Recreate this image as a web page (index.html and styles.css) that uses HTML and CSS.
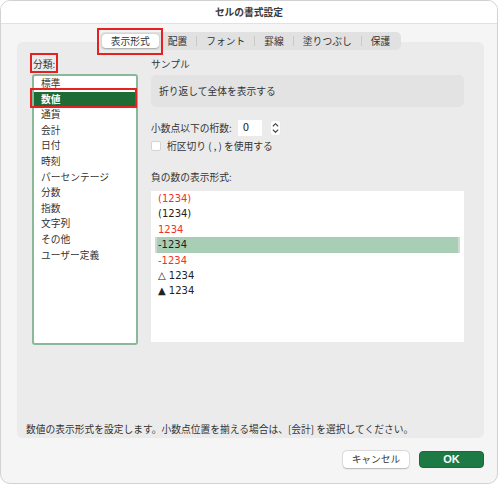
FILE: index.html
```html
<!DOCTYPE html>
<html lang="ja">
<head>
<meta charset="utf-8">
<title>セルの書式設定</title>
<link rel="stylesheet" href="styles.css">
</head>
<body>
<div class="window">
  <div class="titlebar">セルの書式設定</div>
  <div class="main">
    <div class="tabs-wrap">
      <div class="tabs">
        <div class="tab selected">表示形式</div>
        <div class="tab">配置</div>
        <span class="sep"></span>
        <div class="tab">フォント</div>
        <span class="sep"></span>
        <div class="tab">罫線</div>
        <span class="sep"></span>
        <div class="tab">塗りつぶし</div>
        <span class="sep"></span>
        <div class="tab">保護</div>
      </div>
    </div>
    <div class="panel">
      <div class="columns">
        <div class="left">
          <div class="cat-label"><span class="marked">分類:</span></div>
          <ul class="cat-list">
            <li>標準</li>
            <li class="active">数値</li>
            <li>通貨</li>
            <li>会計</li>
            <li>日付</li>
            <li>時刻</li>
            <li>パーセンテージ</li>
            <li>分数</li>
            <li>指数</li>
            <li>文字列</li>
            <li>その他</li>
            <li>ユーザー定義</li>
          </ul>
        </div>
        <div class="right">
          <div class="label">サンプル</div>
          <div class="sample">折り返して全体を表示する</div>
          <div class="decimals">
            <span>小数点以下の桁数:</span>
            <span class="num-input">0</span>
            <svg class="stepper" width="11" height="16" viewBox="0 0 11 16">
              <rect x="0.5" y="0.5" width="10" height="15" rx="3" fill="#fff" stroke="#dcdcdc" stroke-width="0.5"/>
              <path d="M3.2 6 L5.5 3.7 L7.8 6" fill="none" stroke="#444" stroke-width="1.1" stroke-linecap="round" stroke-linejoin="round"/>
              <path d="M3.2 10 L5.5 12.3 L7.8 10" fill="none" stroke="#444" stroke-width="1.1" stroke-linecap="round" stroke-linejoin="round"/>
            </svg>
          </div>
          <div class="check-row">
            <span class="checkbox"></span>
            <span>桁区切り ( , ) を使用する</span>
          </div>
          <div class="label neg-label">負の数の表示形式:</div>
          <ul class="neg-list">
            <li class="red">(1234)</li>
            <li>(1234)</li>
            <li class="red">1234</li>
            <li class="active">-1234</li>
            <li class="red">-1234</li>
            <li>△ 1234</li>
            <li>▲ 1234</li>
          </ul>
        </div>
      </div>
      <p class="desc">数値の表示形式を設定します。小数点位置を揃える場合は、[会計] を選択してください。</p>
    </div>
    <div class="buttons">
      <div class="btn cancel">キャンセル</div>
      <div class="btn ok">OK</div>
    </div>
  </div>
</div>
</body>
</html>
```
FILE: styles.css
```css
* { box-sizing: border-box; }
html, body { margin: 0; padding: 0; background: #ffffff; }
body {
  font-family: "Noto Sans CJK JP", sans-serif;
  font-size: 9.75px;
  color: #333;
}
.window {
  width: 498px;
  height: 484px;
  border: 1px solid #d2d2d2;
  border-radius: 10px;
  overflow: hidden;
  background: #f5f5f5;
}
.titlebar {
  height: 23px;
  background: #fff;
  border-bottom: 1px solid #e2e2e2;
  text-align: center;
  line-height: 22px;
  font-weight: bold;
  color: #3a3a3a;
}
.main { padding: 8px 13px 0 16px; }
.tabs-wrap {
  display: flex;
  justify-content: center;
  position: relative;
  z-index: 1;
  margin-bottom: -8px;
}
.tabs {
  display: flex;
  align-items: center;
  background: #e1e1e1;
  border-radius: 5px;
  padding: 2px;
  height: 18px;
}
.tab { padding: 0 9px; height: 14px; line-height: 14px; color: #333; }
.tab.selected {
  background: #fff;
  border-radius: 4px;
  box-shadow: 0 0.5px 1.5px rgba(0,0,0,0.25);
  position: relative;
}
.tab.selected::after {
  content: "";
  position: absolute;
  left: -5px; right: -4px; top: -6px; bottom: -7px;
  border: 2px solid #e52222;
}
.sep { width: 1px; height: 10px; background: #c9c9c9; }
.panel {
  height: 396px;
  background: #ebebeb;
  border-radius: 6px;
  padding: 15px 20px 2px 15px;
  display: flex;
  flex-direction: column;
}
.columns { display: flex; gap: 13px; }
.left { width: 106px; }
.cat-label { height: 14px; line-height: 14px; margin-bottom: 3px; padding-left: 1px; }
.marked { position: relative; }
.marked::after {
  content: "";
  position: absolute;
  left: -3px; right: -3px; top: -4px; bottom: -2px;
  border: 2px solid #e52222;
}
.cat-list {
  list-style: none;
  margin: 0;
  padding: 0;
  height: 271px;
  background: #fff;
  border: 2px solid #8ab898;
  border-radius: 3px;
}
.cat-list li { height: 15.6px; line-height: 15.6px; padding-left: 7px; position: relative; }
.cat-list li.active { background: #1f6b35; color: #fff; font-weight: bold; }
.cat-list li.active::after {
  content: "";
  position: absolute;
  left: -4px; right: -1px; top: -4px; bottom: -1px;
  border: 2px solid #e52222;
}
.right { width: 313px; }
.label { height: 14px; line-height: 14px; }
.sample {
  margin-top: 4px;
  height: 32px;
  line-height: 32px;
  background: #e3e3e3;
  border-radius: 5px;
  padding-left: 8px;
}
.decimals { margin-top: 13px; display: flex; align-items: center; height: 16px; }
.num-input {
  margin-left: 6px;
  width: 24px;
  height: 16px;
  line-height: 16px;
  background: #fff;
  padding-left: 5px;
  font-family: "DejaVu Sans", sans-serif;
  font-size: 10px;
  color: #222;
}
.stepper { margin-left: 8px; display: block; }
.check-row { margin-top: 3px; display: flex; align-items: center; height: 14px; }
.checkbox {
  width: 10px;
  height: 10px;
  background: #fff;
  border: 1px solid #d4d4d4;
  border-radius: 2px;
  margin-right: 6px;
}
.neg-label { margin-top: 17px; }
.neg-list {
  list-style: none;
  margin: 7px 0 0;
  padding: 0;
  height: 151px;
  background: #fff;
}
.neg-list li {
  height: 15.4px;
  line-height: 15.4px;
  padding-left: 7px;
  font-family: "DejaVu Sans", sans-serif;
  font-size: 10px;
  color: #222;
}
.neg-list li.red { color: #f2302b; }
.neg-list li.active {
  margin: 0 4px;
  padding-left: 1px;
  background: #a8cfb6;
  border-left: 2px solid #d2d8d4;
  border-right: 2px solid #d2d8d4;
}
.desc { margin: auto 0 0 -6px; height: 14px; line-height: 14px; color: #333; }
.buttons { display: flex; justify-content: flex-end; gap: 10px; margin-top: 13px; }
.btn { height: 17px; line-height: 17px; border-radius: 4px; text-align: center; }
.cancel {
  width: 66px;
  background: #fff;
  box-shadow: 0 0 0 0.5px rgba(0,0,0,0.15), 0 0.5px 1.5px rgba(0,0,0,0.2);
  color: #333;
}
.ok {
  width: 65px;
  background: #1d7a44;
  border: 1px solid #176a39;
  line-height: 15px;
  color: #fff;
  font-family: "Liberation Sans", sans-serif;
  font-weight: bold;
  font-size: 11px;
}
```
